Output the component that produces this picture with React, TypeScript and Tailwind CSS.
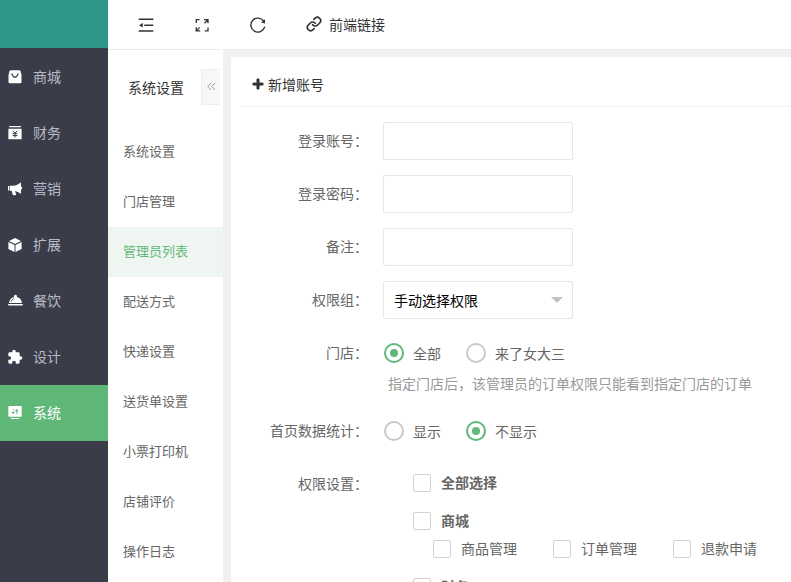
import React, { useState } from 'react';
import { FaPlus } from 'react-icons/fa';
import { MdExtension } from 'react-icons/md';
import { Link } from 'lucide-react';
import { clsx } from 'clsx';

function BagIcon() {
  return (
    <svg className="w-[14px] h-[14px]" viewBox="0 0 14 14">
      <path fill="currentColor" d="M3 .2h8a1.600 1.600 0 0 1 1.500 1.100L13.500 5v7a1.300 1.300 0 0 1-1.300 1.300H1.800A1.300 1.300 0 0 1 .5 12V5l1-3.700A1.600 1.600 0 0 1 3 .2z" />
      <path fill="none" stroke="#393d49" strokeWidth="1.200" strokeLinecap="round" d="M3.900 3.900C4.700 5.800 5.700 7.200 7 7.200s2.300-1.400 3.100-3.300" />
    </svg>
  );
}

function FinanceIcon() {
  return (
    <svg className="w-[14px] h-[14px]" viewBox="0 0 14 14">
      <path fill="currentColor" d="M1.200 0h11.600v1.200H1.200zM.4 2.800h13.200v10.400H.4z" />
      <path fill="none" stroke="#393d49" strokeWidth="1" d="M4.900 4.800L7 7.200l2.100-2.400M4.600 7.700h4.800M4.600 9.600h4.800M7 7.200v4.300" />
    </svg>
  );
}

function HornIcon() {
  return (
    <svg className="w-[14px] h-[14px]" viewBox="0 0 14 14" fill="currentColor">
      <path d="M0 4h1.100v4.600H0zM1.700 3.800h3.600C8 3.600 10.300 2.400 12.300.7c.3-.3.700-.1.700.3v3.500c.9.200 1.300.8 1.300 1.500s-.4 1.300-1.300 1.500v3.600c0 .4-.4.600-.7.300-1.500-1.200-3.300-2.100-5.200-2.500l.9 3.200c.2.700-.2 1.200-.8 1.200H5.700c-.5 0-.8-.2-1-.7L3.600 8.800H1.700z" />
    </svg>
  );
}

function CubeIcon() {
  return (
    <svg className="w-[14px] h-[14px]" viewBox="0 0 14 14" fill="currentColor">
      <path d="M7 0l6 2.900L7 5.900 1 2.900zM.4 4l6.100 3v7L.4 11zM13.600 4L7.500 7v7l6.100-3z" />
    </svg>
  );
}

function DishIcon() {
  return (
    <svg className="w-[15px] h-[14px]" viewBox="0 0 15 14">
      <path fill="currentColor" d="M7.500.8a1.500 1.500 0 0 1 1.300 2.200c2.900.6 5 3 5.200 6H1c.2-3 2.300-5.400 5.200-6A1.500 1.500 0 0 1 7.500.8zM.1 10h14.800v.8c0 .5-.4.800-.8.800H.9a.8.800 0 0 1-.8-.8z" />
      <path fill="none" stroke="#393d49" strokeWidth=".9" strokeLinecap="round" d="M3.300 7.100c.4-1.100 1.200-1.900 2.300-2.300" />
    </svg>
  );
}

function MonitorIcon() {
  return (
    <svg className="w-[14px] h-[14px]" viewBox="0 0 14 14">
      <path fill="currentColor" d="M1.300 0h11.400a1 1 0 0 1 1 1v8.700a1 1 0 0 1-1 1H1.300a1 1 0 0 1-1-1V1a1 1 0 0 1 1-1zM3 12h8v1.100H3z" />
      <path fill="none" stroke="#5fb878" strokeWidth="1" d="M5.300 3.200v.9M5.300 5v3M4 6.500h2.500M8.800 3v5M7.200 4.700h3" />
    </svg>
  );
}

function OutdentIcon() {
  return (
    <svg className="w-4 h-4" viewBox="0 0 16 16">
      <path fill="none" stroke="currentColor" strokeWidth="1.500" strokeLinecap="round" d="M1.200 2.300h13.600M6.800 8.200h8M1.200 14h13.600" />
      <path fill="currentColor" d="M1 8.200l3.800-2.300v4.600z" />
    </svg>
  );
}

function FullscreenIcon() {
  return (
    <svg className="w-4 h-4" viewBox="0 0 16 16" fill="none" stroke="currentColor" strokeWidth="1.300">
      <path d="M2.300 6V2.700h3.200M14 10.400v3.500h-3.300M10 2.700h4v3.600M14 2.700l-3.500 3.500M6.200 13.900h-4v-3.700M2.200 13.900l3.500-3.500" />
    </svg>
  );
}

function RefreshIcon() {
  return (
    <svg className="w-4 h-4" viewBox="0 0 16 16">
      <path fill="none" stroke="currentColor" strokeWidth="1.400" strokeLinecap="round" d="M14.600 10.100A7 7 0 1 1 13.700 4.200" />
      <path fill="currentColor" d="M15 2.300v4.200l-4-.9z" />
    </svg>
  );
}

const mainMenu = [
  { name: '商城', icon: <BagIcon /> },
  { name: '财务', icon: <FinanceIcon /> },
  { name: '营销', icon: <HornIcon /> },
  { name: '扩展', icon: <CubeIcon /> },
  { name: '餐饮', icon: <DishIcon /> },
  { name: '设计', icon: <MdExtension className="w-4 h-4 -ml-px" /> },
  { name: '系统', icon: <MonitorIcon /> },
];

const subMenu = [
  '系统设置',
  '门店管理',
  '管理员列表',
  '配送方式',
  '快递设置',
  '送货单设置',
  '小票打印机',
  '店铺评价',
  '操作日志',
];

const permissions = [
  { name: '商城', items: ['商品管理', '订单管理', '退款申请'] },
  { name: '财务', items: ['消费明细', '余额明细', '提现记录'] },
];

function FormRow({ label, htmlFor, children }: { label: string; htmlFor?: string; children: React.ReactNode }) {
  return (
    <div className="flex mb-[15px]">
      {htmlFor ? (
        <label htmlFor={htmlFor} className="w-32 shrink-0 leading-9 text-right">{label}</label>
      ) : (
        <span className="w-32 shrink-0 leading-9 text-right">{label}</span>
      )}
      <div className="ml-[15px] flex-1 min-w-0">{children}</div>
    </div>
  );
}

function TextInput({ id, type = 'text' }: { id: string; type?: string }) {
  return (
    <input
      id={id}
      type={type}
      className="block w-[190px] h-[38px] px-[10px] bg-white border border-[#e6e6e6] rounded-xs outline-none focus:border-[#c9c9c9]"
    />
  );
}

function RadioGroup({ name, options, initial }: { name: string; options: string[]; initial: string }) {
  const [value, setValue] = useState(initial);

  return (
    <div className="flex items-center gap-[25px] h-[38px] pl-px" role="radiogroup">
      {options.map((option) => (
        <label key={option} className="flex items-center gap-[9px] cursor-pointer">
          <span className="grid place-items-center">
            <input
              type="radio"
              name={name}
              checked={value === option}
              onChange={() => setValue(option)}
              className="col-start-1 row-start-1 appearance-none w-5 h-5 rounded-full border-2 border-[#c9c9c9] checked:border-[#5fb878]"
            />
            {value === option && <span className="col-start-1 row-start-1 w-2 h-2 rounded-full bg-[#5fb878]" />}
          </span>
          {option}
        </label>
      ))}
    </div>
  );
}

function CheckItem({ label, bold }: { label: string; bold?: boolean }) {
  return (
    <label className={clsx('flex items-center gap-[10px] h-7 cursor-pointer', bold && 'font-bold')}>
      <input
        type="checkbox"
        className="appearance-none w-[18px] h-[18px] shrink-0 border border-[#d2d2d2] rounded-xs checked:bg-[#5fb878] checked:border-[#5fb878]"
      />
      <span className="pb-0.5">{label}</span>
    </label>
  );
}

export default function App() {
  return (
    <div className="flex h-screen overflow-hidden bg-[#f0f0f0] text-sm text-[#666] font-['Noto_Sans_CJK_SC',sans-serif]">
      <aside className="w-[108px] shrink-0 bg-[#3b3c49]">
        <div className="h-12 bg-[#2f9688]" />
        <nav className="pt-px">
          {mainMenu.map((item) => (
            <a
              key={item.name}
              href="#"
              className={clsx(
                'flex items-center h-14 pl-2 text-white',
                item.name === '系统' ? 'bg-[#5fb878]' : 'hover:bg-[#454656]'
              )}
            >
              <span className="w-[25px]">{item.icon}</span>
              <span className={clsx('pb-0.5', item.name !== '系统' && 'text-[#b9bac6]')}>{item.name}</span>
            </a>
          ))}
        </nav>
      </aside>

      <div className="flex-1 min-w-0 flex flex-col">
        <header className="flex items-center h-[50px] shrink-0 bg-white border-b border-[#ececec] text-[#333]">
          <button type="button" aria-label="Toggle menu" className="grid place-items-center w-14 h-full ml-[10px]">
            <OutdentIcon />
          </button>
          <button type="button" aria-label="Fullscreen" className="grid place-items-center w-14 h-full">
            <FullscreenIcon />
          </button>
          <button type="button" aria-label="Refresh" className="grid place-items-center w-14 h-full">
            <RefreshIcon />
          </button>
          <a href="#" className="flex items-center gap-[7px] h-full pb-0.5 px-5">
            <Link className="w-4 h-4" strokeWidth={2.5} />
            前端链接
          </a>
        </header>

        <div className="flex flex-1 min-h-0">
          <div className="w-[115px] shrink-0 bg-white overflow-hidden">
            <div className="flex items-center h-[77px] pb-1 pl-5 text-[#333]">
              <h2 className="flex-1">系统设置</h2>
              <button
                type="button"
                aria-label="Collapse"
                className="w-[19px] h-9 mr-[3px] bg-[#f7f7f7] border border-r-0 border-[#eee] grid place-items-center text-[#999]"
              >
                <svg className="w-[9px] h-[9px]" viewBox="0 0 9 9" fill="none" stroke="currentColor">
                  <path d="M4.200 1L1 4.500 4.200 8M8 1L4.800 4.500 8 8" />
                </svg>
              </button>
            </div>
            <nav>
              {subMenu.map((name) => (
                <a
                  key={name}
                  href="#"
                  className={clsx(
                    'flex items-center h-[50px] pl-[15px] pb-0.5 text-[13px]',
                    name === '管理员列表' ? 'bg-[#eff5f1] text-[#5fb878]' : 'hover:text-[#5fb878]'
                  )}
                >
                  {name}
                </a>
              ))}
            </nav>
          </div>

          <main className="flex-1 min-w-0 pt-[7px] pl-2 overflow-y-auto [scrollbar-width:none]">
            <div className="min-h-full pl-[9px] bg-white rounded-tl-xs">
              <h1 className="flex items-center gap-1 h-[50px] pt-1 pl-3 border-b border-[#f2f2f2] text-[#333]">
                <FaPlus className="w-3 h-3" strokeWidth={30} />
                新增账号
              </h1>

              <form className="pt-[15px]" onSubmit={(e) => e.preventDefault()}>
                <FormRow label="登录账号：" htmlFor="account">
                  <TextInput id="account" />
                </FormRow>
                <FormRow label="登录密码：" htmlFor="password">
                  <TextInput id="password" type="password" />
                </FormRow>
                <FormRow label="备注：" htmlFor="remark">
                  <TextInput id="remark" />
                </FormRow>
                <FormRow label="权限组：" htmlFor="group">
                  <div className="relative w-[190px]">
                    <select
                      id="group"
                      className="block appearance-none w-full h-[38px] px-[10px] bg-white border border-[#e6e6e6] rounded-xs text-black outline-none"
                    >
                      <option>手动选择权限</option>
                    </select>
                    <span className="absolute right-[10px] top-4 border-x-6 border-t-6 border-x-transparent border-t-[#c2c2c2] pointer-events-none" />
                  </div>
                </FormRow>
                <FormRow label="门店：">
                  <RadioGroup name="store" options={['全部', '来了女大三']} initial="全部" />
                  <p className="pt-px pb-1 pl-[5px] leading-5 text-[#999]">指定门店后，该管理员的订单权限只能看到指定门店的订单</p>
                </FormRow>
                <FormRow label="首页数据统计：">
                  <RadioGroup name="stats" options={['显示', '不显示']} initial="不显示" />
                </FormRow>
                <FormRow label="权限设置：">
                  <div className="pt-1 pl-[30px]">
                    <CheckItem label="全部选择" bold />
                    {permissions.map((group) => (
                      <div key={group.name} className="mt-[10px]">
                        <CheckItem label={group.name} bold />
                        <div className="flex flex-wrap gap-x-9 pl-5">
                          {group.items.map((item) => (
                            <CheckItem key={item} label={item} />
                          ))}
                        </div>
                      </div>
                    ))}
                  </div>
                </FormRow>
              </form>
            </div>
          </main>
        </div>
      </div>
    </div>
  );
}
